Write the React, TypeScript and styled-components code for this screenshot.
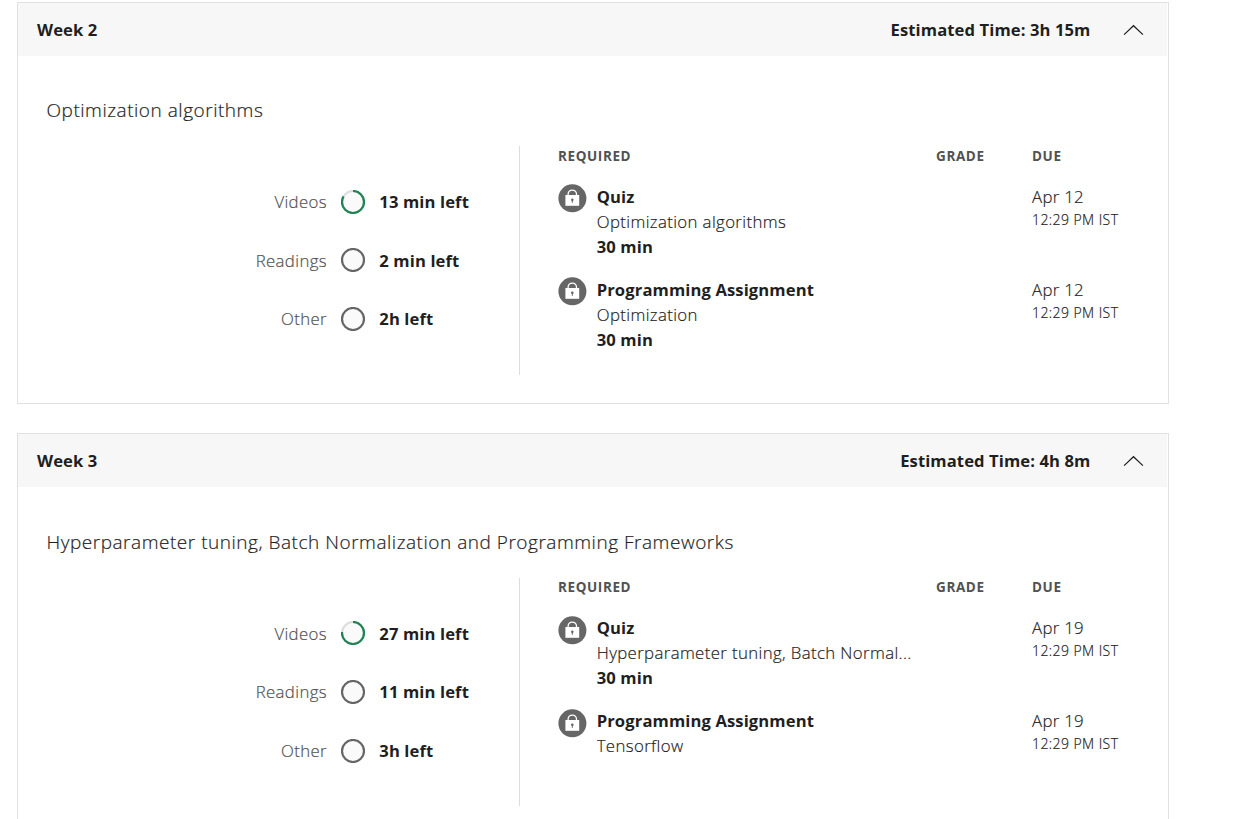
import React from "react";
import styled, { createGlobalStyle } from "styled-components";

const GlobalStyle = createGlobalStyle`
  * { box-sizing: border-box; }
  html, body { margin: 0; padding: 0; background: #fff; overflow: hidden; }
  body { font-family: "Open Sans", "Noto Sans", sans-serif; color: #1f1f1f; height: 819px; }
`;

const light = "font-weight: 300; -webkit-text-stroke: 0.2px currentColor;";
const bold = "font-weight: 700;";

const Page = styled.main`
  width: 1248px;
  height: 819px;
  overflow: hidden;
  padding: 2px 0 0 17px;
`;

const Card = styled.section`
  width: 1152px;
  height: 402px;
  margin-bottom: 29px;
  border: 1px solid #e1e1e1;
`;

const Header = styled.header`
  display: flex;
  align-items: center;
  height: 53px;
  margin-right: 1px;
  padding: 0 22.5px 0 19px;
  background: #f7f7f7;
  font-size: 16.6px;
  ${bold}
  line-height: 24px;
  letter-spacing: 0.1px;
`;

const WeekName = styled.h2`
  flex: 1;
  margin: 0;
  font: inherit;
`;

const Chevron = styled.svg`
  display: block;
  width: 22px;
  height: 14px;
  margin-left: 32px;
`;

const Title = styled.h3<{ $drop: number }>`
  margin: 0;
  padding: ${(p) => 40 + p.$drop}px 0 0 28.5px;
  font-size: 19px;
  ${light}
  line-height: 28px;
  letter-spacing: 0.53px;
`;

const Columns = styled.div`
  display: flex;
  margin-top: 22px;
`;

const Progress = styled.div`
  width: 502px;
  height: 228.5px;
  padding-top: 26.62px;
  border-right: 1px solid #dcdcdc;
`;

const ProgressRow = styled.div`
  display: grid;
  grid-template-columns: 309px 24px 1fr;
  column-gap: 14px;
  align-items: center;
  height: 58.5625px;
  font-size: 16.8px;
  line-height: 24px;
`;

const Label = styled.span`
  padding-top: 0.5px;
  text-align: right;
  ${light}
  letter-spacing: 0.38px;
  color: #525252;
`;

const Remaining = styled.span`
  padding: 0.5px 0 0 0.3px;
  ${bold}
  font-size: 16.6px;
  letter-spacing: 0.12px;
`;

const Ring = styled.svg`
  display: block;
  width: 24px;
  height: 24px;
`;

const Required = styled.div`
  flex: 1;
  margin-top: -0.1px;
  padding-left: 38px;
`;

const tableColumns = "378px 96px 1fr";

const TableHead = styled.div`
  display: grid;
  grid-template-columns: ${tableColumns};
  height: 38px;
  font-size: 13.5px;
  ${bold}
  line-height: 20px;
  letter-spacing: 0.6px;
  color: #525252;
`;

const Item = styled.div`
  display: grid;
  grid-template-columns: ${tableColumns};
  height: 93px;
`;

const Work = styled.div`
  display: flex;
  gap: 9.4px;
`;

const LockIcon = styled.svg`
  display: block;
  flex: none;
  width: 29px;
  height: 29px;
  margin: 0.3px 0 0 0.3px;
`;

const WorkText = styled.div`
  width: 330px;
  font-size: 16.8px;
  line-height: 25px;
`;

const Line = styled.div<{ $strong?: boolean }>`
  ${(p) => (p.$strong ? bold : light)}
  font-size: ${(p) => (p.$strong ? 16.6 : 16.8)}px;
  letter-spacing: ${(p) => (p.$strong ? 0.11 : 0.38)}px;
  white-space: nowrap;
  overflow: hidden;
  text-overflow: ellipsis;
`;

const Due = styled.div`
  grid-column: 3;
  font-size: 16.8px;
  ${light}
  line-height: 25px;
  letter-spacing: 0.3px;
`;

const Time = styled.div`
  font-size: 14px;
  line-height: 21px;
  letter-spacing: 0.42px;
`;

type WorkItem = { kind: string; name: string; duration?: string; date: string };
type Week = {
  name: string;
  estimate: string;
  title: string;
  progress: { label: string; left: string; done: number }[];
  items: WorkItem[];
};

const weeks: Week[] = [
  {
    name: "Week 2",
    estimate: "3h 15m",
    title: "Optimization algorithms",
    progress: [
      { label: "Videos", left: "13 min left", done: 0.83 },
      { label: "Readings", left: "2 min left", done: 0 },
      { label: "Other", left: "2h left", done: 0 },
    ],
    items: [
      { kind: "Quiz", name: "Optimization algorithms", duration: "30 min", date: "Apr 12" },
      { kind: "Programming Assignment", name: "Optimization", duration: "30 min", date: "Apr 12" },
    ],
  },
  {
    name: "Week 3",
    estimate: "4h 8m",
    title: "Hyperparameter tuning, Batch Normalization and Programming Frameworks",
    progress: [
      { label: "Videos", left: "27 min left", done: 0.76 },
      { label: "Readings", left: "11 min left", done: 0 },
      { label: "Other", left: "3h left", done: 0 },
    ],
    items: [
      { kind: "Quiz", name: "Hyperparameter tuning, Batch Normal...", duration: "30 min", date: "Apr 19" },
      { kind: "Programming Assignment", name: "Tensorflow", date: "Apr 19" },
    ],
  },
];

function ProgressRing({ done }: { done: number }) {
  const length = 2 * Math.PI * 11;
  return (
    <Ring viewBox="0 0 24 24" fill="none">
      <circle cx="12" cy="12" r="11" fill="#fafafa" stroke={done ? "#dedede" : "#666"} strokeWidth="2.2" />
      {done > 0 && (
        <circle
          cx="12"
          cy="12"
          r="11"
          stroke="#1f8354"
          strokeWidth="2.2"
          strokeDasharray={`${length * done} ${length}`}
          transform="rotate(-90 12 12)"
        />
      )}
    </Ring>
  );
}

function Lock() {
  return (
    <LockIcon viewBox="-0.4 -0.3 29 29">
      <circle cx="14" cy="14" r="14" fill="#666" />
      <path d="M9.7 12V10a4.2 4.2 0 0 1 8.4 0v2" fill="none" stroke="#fff" strokeWidth="1.3" />
      <rect x="7" y="10.7" width="13.8" height="10.8" fill="#fff" />
      <circle cx="13.9" cy="15.5" r="1.3" fill="#666" />
      <path d="M13.9 15.5v3" stroke="#666" strokeWidth="1" />
    </LockIcon>
  );
}

export default function App() {
  return (
    <>
      <GlobalStyle />
      <Page>
        {weeks.map((week, index) => (
          <Card key={week.name}>
            <Header>
              <WeekName>{week.name}</WeekName>
              <span>Estimated Time: {week.estimate}</span>
              <Chevron viewBox="0 0 22 14" fill="none">
                <path d="M1.1 11.6 10.5 2.7l9.4 8.9" stroke="#1f1f1f" strokeWidth="1.2" />
              </Chevron>
            </Header>
            <Title $drop={index * 0.5}>{week.title}</Title>
            <Columns>
              <Progress>
                {week.progress.map((row) => (
                  <ProgressRow key={row.label}>
                    <Label>{row.label}</Label>
                    <ProgressRing done={row.done} />
                    <Remaining>{row.left}</Remaining>
                  </ProgressRow>
                ))}
              </Progress>
              <Required>
                <TableHead>
                  <span>REQUIRED</span>
                  <span>GRADE</span>
                  <span>DUE</span>
                </TableHead>
                {week.items.map((item) => (
                  <Item key={item.kind}>
                    <Work>
                      <Lock />
                      <WorkText>
                        <Line $strong>{item.kind}</Line>
                        <Line>{item.name}</Line>
                        {item.duration && <Line $strong>{item.duration}</Line>}
                      </WorkText>
                    </Work>
                    <Due>
                      {item.date}
                      <Time>12:29 PM IST</Time>
                    </Due>
                  </Item>
                ))}
              </Required>
            </Columns>
          </Card>
        ))}
      </Page>
    </>
  );
}
